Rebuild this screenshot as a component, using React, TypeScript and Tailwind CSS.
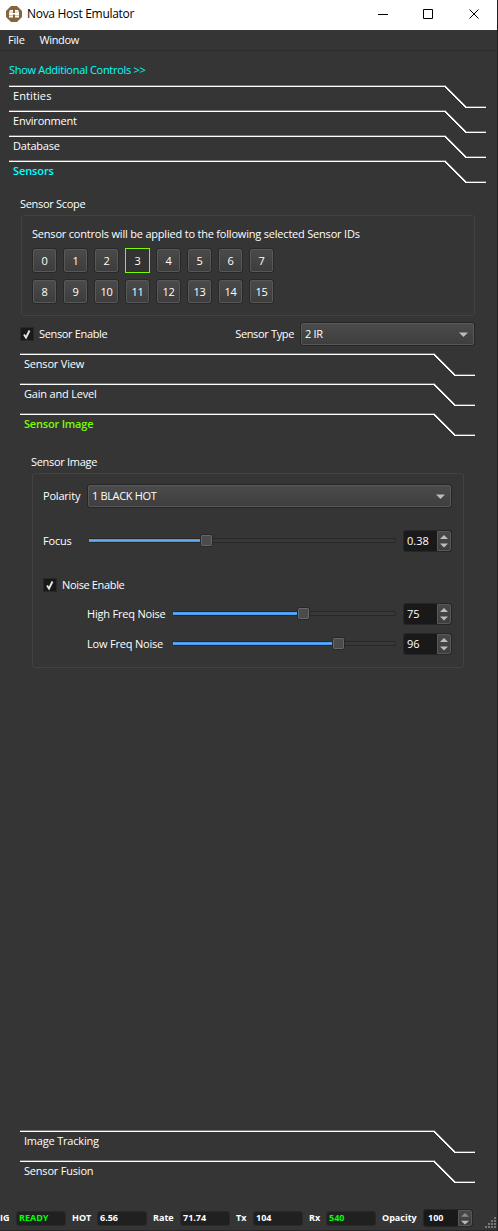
import { type ReactNode } from "react";

const SENSOR_IDS = Array.from({ length: 16 }, (_, i) => i);
const SELECTED_SENSOR = 3;

function TitleBar() {
  return (
    <div className="flex h-[30px] items-center bg-white pl-[6px] text-black">
      <svg width="16" height="16" viewBox="0 0 16 16" className="-mt-[2px]">
        <path d="M5 0h6l5 5v6l-5 5H5l-5-5V5z" fill="#86633a" />
        <path d="M4 4h3v7.500H3V6zM9 4h3l1 2v5.500H9z" fill="#fff" />
        <path d="M7 7h2v1.500H7z" fill="#fff" />
        <path d="M3 6h4m2 0h4M3 9.500h4m2 0h4" stroke="#c9b399" strokeWidth="0.800" />
      </svg>
      <span className="-mt-[2px] ml-[5px] w-[112px] text-[12px] tracking-[-0.3px] whitespace-nowrap">
        Nova Host Emulator
      </span>
      <svg
        width="102"
        height="12"
        viewBox="0 0 102 12"
        className="-mt-[2px] mr-[17px] ml-auto"
        fill="none"
        stroke="#000"
      >
        <path d="M0 6.500h10" />
        <path d="M45.500 1.500h9v9h-9z" />
        <path d="M91.500 1.500l9 9m0-9l-9 9" />
      </svg>
    </div>
  );
}

interface SectionTabProps {
  label: string;
  color?: string;
  outer?: boolean;
}

function SectionTab({ label, color = "text-white", outer }: SectionTabProps) {
  const points = outer
    ? "0,1.5 436,1.5 456.5,22 477,22"
    : "0,1.5 414,1.5 434.5,22 455,22";
  return (
    <div className={`grid ${outer ? "h-[25px] w-[477px]" : "h-[30px] w-[455px]"}`}>
      <svg
        className="col-start-1 row-start-1 overflow-visible"
        width={outer ? 477 : 455}
        height="23"
        fill="none"
        shapeRendering="crispEdges"
      >
        <polyline points={points} stroke="#777" transform="translate(0 -1)" />
        <polyline points={points} stroke="#fff" />
      </svg>
      <span className={`col-start-1 row-start-1 pt-[3px] pl-[4px] leading-4 ${color}`}>
        {label}
      </span>
    </div>
  );
}

function GroupBox({ className, children }: { className: string; children: ReactNode }) {
  return (
    <div className={`rounded-[3px] border border-[#424242] ${className}`}>
      {children}
    </div>
  );
}

function IdButton({ id }: { id: number }) {
  if (id === SELECTED_SENSOR) {
    return (
      <button
        type="button"
        className="flex size-[25px] items-center justify-center border border-[#7cfc00] bg-[#333] pt-px"
      >
        {id}
      </button>
    );
  }
  return (
    <button
      type="button"
      className="size-[25px] rounded-[3px] border border-[#282828]"
    >
      <span className="flex size-full items-center justify-center rounded-[2px] border border-[#585858] bg-linear-to-b from-[#4a4a4a] to-[#3d3d3d] pt-px">
        {id}
      </span>
    </button>
  );
}

function CheckBox({ label }: { label: string }) {
  return (
    <label className="flex h-[14px] items-center gap-[5px]">
      <svg width="14" height="14" viewBox="0 0 14 14">
        <path d="M.5.5h13v13H.5z" fill="#191919" stroke="#282828" />
        <path
          d="M4 7.500l2 3 3.500-7"
          fill="none"
          stroke="#e4e4e4"
          strokeWidth="1.900"
        />
      </svg>
      <span className="tracking-[-0.35px]">{label}</span>
    </label>
  );
}

function Select({ value, className }: { value: string; className: string }) {
  return (
    <div className={`h-[24px] rounded-[3px] border border-[#262626] ${className}`}>
      <div className="flex h-full items-center justify-between rounded-[2px] border border-[#585858] bg-linear-to-b from-[#4b4b4b] to-[#3e3e3e] pr-[5px] pl-[3px]">
        <span className="tracking-[-0.35px]">{value}</span>
        <svg width="9" height="5" viewBox="0 0 9 5">
          <path d="M0 .5h9l-4.500 4.500z" fill="#bcbcbc" />
        </svg>
      </div>
    </div>
  );
}

function SpinBox({ value, small }: { value: string; small?: boolean }) {
  return (
    <div
      className={`flex rounded-[3px] border border-[#262626] bg-[#191919] ${
        small ? "h-[18px] w-[50px]" : "h-[22px] w-[49px]"
      }`}
    >
      <span className={`flex flex-1 items-center ${small ? "pl-[4px]" : "pl-[3px] tracking-normal"}`}>
        {value}
      </span>
      <span className="flex w-[14px] flex-col items-center justify-center rounded-r-[2px] border border-[#585858] bg-linear-to-b from-[#484848] to-[#3e3e3e]">
        <svg width="8" height={small ? 13 : 14} viewBox="0 0 8 14" preserveAspectRatio="none">
          <path d="M0 5h8l-4-4z" fill={small ? "#8a8a8a" : "#bcbcbc"} />
          <path d="M0 9.500h8l-4 4z" fill="#bcbcbc" />
        </svg>
      </span>
    </div>
  );
}

function Slider({ width, position }: { width: number; position: number }) {
  return (
    <svg width={width} height="14" className="shrink-0">
      <rect x=".5" y="4.500" width={width - 1} height="4" rx="1" fill="#383838" stroke="#272727" />
      <rect x="0" y="5" width={position} height="3" fill="#4a9bee" />
      <rect x="0" y="6" width={position} height="1" fill="#63aaf2" />
      <rect x={position - 0.5} y=".5" width="12" height="12" rx="2" fill="#484848" stroke="#272727" />
      <rect x={position + 0.5} y="1.500" width="10" height="10" rx="1" fill="#4b4b4b" stroke="#686868" />
    </svg>
  );
}

interface StatusFieldProps {
  label: string;
  value: string;
  labelWidth: string;
  color?: string;
}

function StatusField({ label, value, labelWidth, color = "text-white" }: StatusFieldProps) {
  return (
    <div className="flex items-center">
      <span className={labelWidth}>{label}</span>
      <span
        className={`flex h-[15px] w-[50px] items-center rounded-[3px] border border-[#292929] bg-[#202020] pl-[2px] ${color}`}
      >
        {value}
      </span>
    </div>
  );
}

function StatusBar() {
  return (
    <div className="flex h-[22px] items-center border-b border-[#292929] pb-[3px] text-[9px] font-bold tracking-normal">
      <StatusField label="IG" value="READY" labelWidth="w-[16px]" color="text-[#00ff00]" />
      <StatusField label="HOT" value="6.56" labelWidth="w-[25px] ml-[6px]" />
      <StatusField label="Rate" value="71.74" labelWidth="w-[27px] ml-[6px]" />
      <StatusField label="Tx" value="104" labelWidth="w-[17px] ml-[6px]" />
      <StatusField label="Rx" value="540" labelWidth="w-[17px] ml-[6px]" color="text-[#00ff00]" />
      <span className="ml-[6px] w-[41px]">Opacity</span>
      <SpinBox value="100" small />
      <svg width="12" height="12" className="mt-[9px] ml-auto" fill="#777">
        <path d="M9 0h2v2H9zM6 3h2v2H6zM9 3h2v2H9zM3 6h2v2H3zM6 6h2v2H6zM9 6h2v2H9zM0 9h2v2H0zM3 9h2v2H3zM6 9h2v2H6zM9 9h2v2H9z" />
      </svg>
    </div>
  );
}

export default function App() {
  return (
    <div className="flex h-[1231px] w-[498px] flex-col overflow-hidden border-r border-[#222] bg-[#353535] font-['Open_Sans',sans-serif] text-[11px] leading-4 tracking-[-0.2px] whitespace-nowrap text-white">
      <TitleBar />
      <div className="flex h-[21px] shrink-0 items-center gap-[15px] border-b border-[#2d2d2d] pl-[8px]">
        <span>File</span>
        <span className="tracking-[-0.4px]">Window</span>
      </div>

      <div className="flex h-[34px] shrink-0 items-center pt-[4px] pl-[9px] tracking-[-0.3px] text-[#00ffff]">
        Show Additional Controls &gt;&gt;
      </div>
      <div className="flex h-[110px] shrink-0 flex-col pl-[9px]">
        <SectionTab outer label="Entities" color="text-white tracking-[0.1px]" />
        <SectionTab outer label="Environment" />
        <SectionTab outer label="Database" />
        <SectionTab outer label="Sensors" color="text-[#00ffff] font-semibold tracking-[-0.1px]" />
      </div>

      <div className="flex flex-1 flex-col pl-[20px]">
        <div className="h-[20px] pt-px tracking-[-0.3px]">Sensor Scope</div>
        <GroupBox className="ml-px h-[101px] w-[454px] pt-[10px] pl-[10px]">
          <div>Sensor controls will be applied to the following selected Sensor IDs</div>
          <div className="mt-[6px] grid w-[248px] grid-cols-8 gap-y-[6px]">
            {SENSOR_IDS.map((id) => (
              <IdButton key={id} id={id} />
            ))}
          </div>
        </GroupBox>

        <div className="mt-[6px] flex h-[24px] w-[455px] items-center">
          <CheckBox label="Sensor Enable" />
          <span className="mr-[6px] ml-auto tracking-[-0.35px]">Sensor Type</span>
          <Select value="2 IR" className="w-[175px]" />
        </div>

        <div className="mt-[7px] h-[100px]">
          <SectionTab label="Sensor View" />
          <SectionTab label="Gain and Level" />
          <SectionTab label="Sensor Image" color="text-[#7cfc00] font-semibold tracking-[-0.2px]" />
        </div>

        <div className="h-[20px] pt-px pl-[11px] tracking-[-0.3px]">Sensor Image</div>
        <GroupBox className="ml-[12px] h-[195px] w-[432px] pt-[10px] pl-[10px]">
          <div className="flex items-center">
            <span className="w-[44px]">Polarity</span>
            <Select value="1 BLACK HOT" className="w-[365px]" />
          </div>
          <div className="mt-[22px] flex items-center">
            <span className="w-[46px]">Focus</span>
            <Slider width={307} position={112} />
            <span className="ml-[7px]">
              <SpinBox value="0.38" />
            </span>
          </div>
          <div className="mt-[26px]">
            <CheckBox label="Noise Enable" />
          </div>
          <div className="mt-[11px] flex items-center pl-[44px]">
            <span className="w-[86px]">High Freq Noise</span>
            <Slider width={223} position={125} />
            <span className="ml-[7px]">
              <SpinBox value="75" />
            </span>
          </div>
          <div className="mt-[8px] flex items-center pl-[44px]">
            <span className="w-[86px]">Low Freq Noise</span>
            <Slider width={223} position={160} />
            <span className="ml-[7px]">
              <SpinBox value="96" />
            </span>
          </div>
        </GroupBox>

        <div className="mt-auto h-[79px]">
          <SectionTab label="Image Tracking" />
          <SectionTab label="Sensor Fusion" />
        </div>
      </div>
      <StatusBar />
    </div>
  );
}
